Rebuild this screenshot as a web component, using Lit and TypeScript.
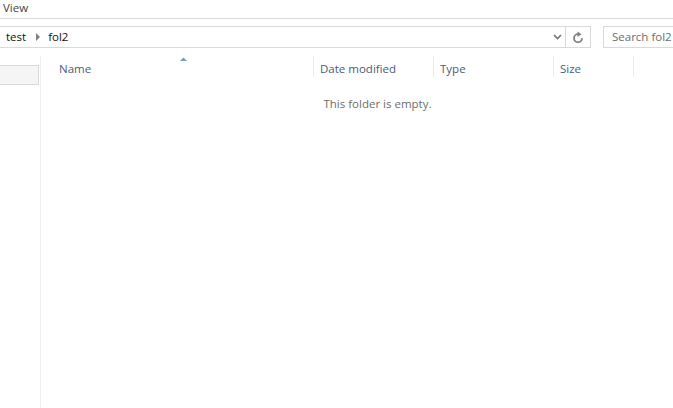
import { LitElement, html, css } from "lit";
import { customElement } from "lit/decorators.js";

@customElement("app-root")
export class AppRoot extends LitElement {
  static styles = css`
    :host { display: block; width: 673px; height: 408px; overflow: hidden; background: #fff; font-family: "Open Sans", "Noto Sans", sans-serif; font-size: 12px; color: #000; }
    .menu { height: 18px; border-bottom: 1px solid #d9d9d9; box-sizing: content-box; padding-left: 3px; line-height: 16px; color: #444; font-size: 11.5px; }
    .toolbar { display: flex; height: 22px; margin-top: 7px; align-items: stretch; }
    .address { width: 591px; box-sizing: border-box; border: 1px solid #d9d9d9; border-left: 0; display: flex; align-items: center; padding: 0 0 2px 6px; }
    .crumb { font-size: 11.5px; color: #111; }
    .sep { margin: 2px 8px 0 10px; width: 0; height: 0; border-left: 4px solid #808080; border-top: 4px solid transparent; border-bottom: 4px solid transparent; }
    .spacer { flex: 1; }
    .chev { width: 16px; display: flex; align-items: center; justify-content: center; padding-top: 2px; }
    .refresh { width: 24px; align-self: stretch; margin-bottom: -2px; border-left: 1px solid #d9d9d9; display: flex; align-items: center; justify-content: center; }
    .search { margin-left: 12px; flex: 1; box-sizing: border-box; border: 1px solid #d9d9d9; border-right: 0; padding-left: 8px; line-height: 19px; color: #6d6d6d; font-size: 11.5px; white-space: nowrap; overflow: hidden; }
    .body { display: flex; margin-top: 8px; height: 352px; }
    .nav { width: 40px; border-right: 1px solid #f0f0f0; padding-top: 9px; }
    .selected { width: 39px; height: 20px; box-sizing: border-box; background: #f5f5f5; border: 1px solid #d9d9d9; border-left: 0; }
    .content { flex: 1; min-width: 0; }
    .head { display: flex; height: 25px; position: relative; }
    .col { box-sizing: border-box; padding: 5px 0 0 6px; line-height: 16px; font-size: 11.5px; color: #4c5a7a; border-right: 1px solid #e6ebf2; height: 21px; }
    .name { width: 273px; padding-left: 18px; }
    .date { width: 120px; }
    .type { width: 120px; }
    .size { width: 80px; }
    .arrow { position: absolute; left: 139px; top: 1px; }
    .empty { text-align: center; width: 673px; padding-top: 15px; line-height: 16px; color: #6d6d6d; font-size: 11.5px; }
  `;

  render() {
    return html`
      <div class="menu">View</div>
      <div class="toolbar">
        <div class="address">
          <span class="crumb">test</span><span class="sep"></span><span class="crumb">fol2</span>
          <span class="spacer"></span>
          <span class="chev"><svg width="9" height="6" viewBox="0 0 9 6"><path d="M1 1l3.5 3.5L8 1" fill="none" stroke="#777" stroke-width="1.7"/></svg></span>
          <span class="refresh"><svg width="12" height="13" viewBox="0 0 12 13"><path d="M6 3.2A4 4 0 1 0 10 7.2" fill="none" stroke="#808080" stroke-width="1.8"/><path d="M5.5 0.4L9.5 3.2 5.5 6z" fill="#808080"/></svg></span>
        </div>
        <div class="search">Search fol2</div>
      </div>
      <div class="body">
        <div class="nav"><div class="selected"></div></div>
        <div class="content">
          <div class="head">
            <div class="col name">Name</div>
            <div class="col date">Date modified</div>
            <div class="col type">Type</div>
            <div class="col size">Size</div>
            <svg class="arrow" width="7" height="4" viewBox="0 0 7 4"><path d="M0 4L3.5 0.5 7 4z" fill="#6f9fc4"/></svg>
          </div>
          <div class="empty">This folder is empty.</div>
        </div>
      </div>
    `;
  }
}
